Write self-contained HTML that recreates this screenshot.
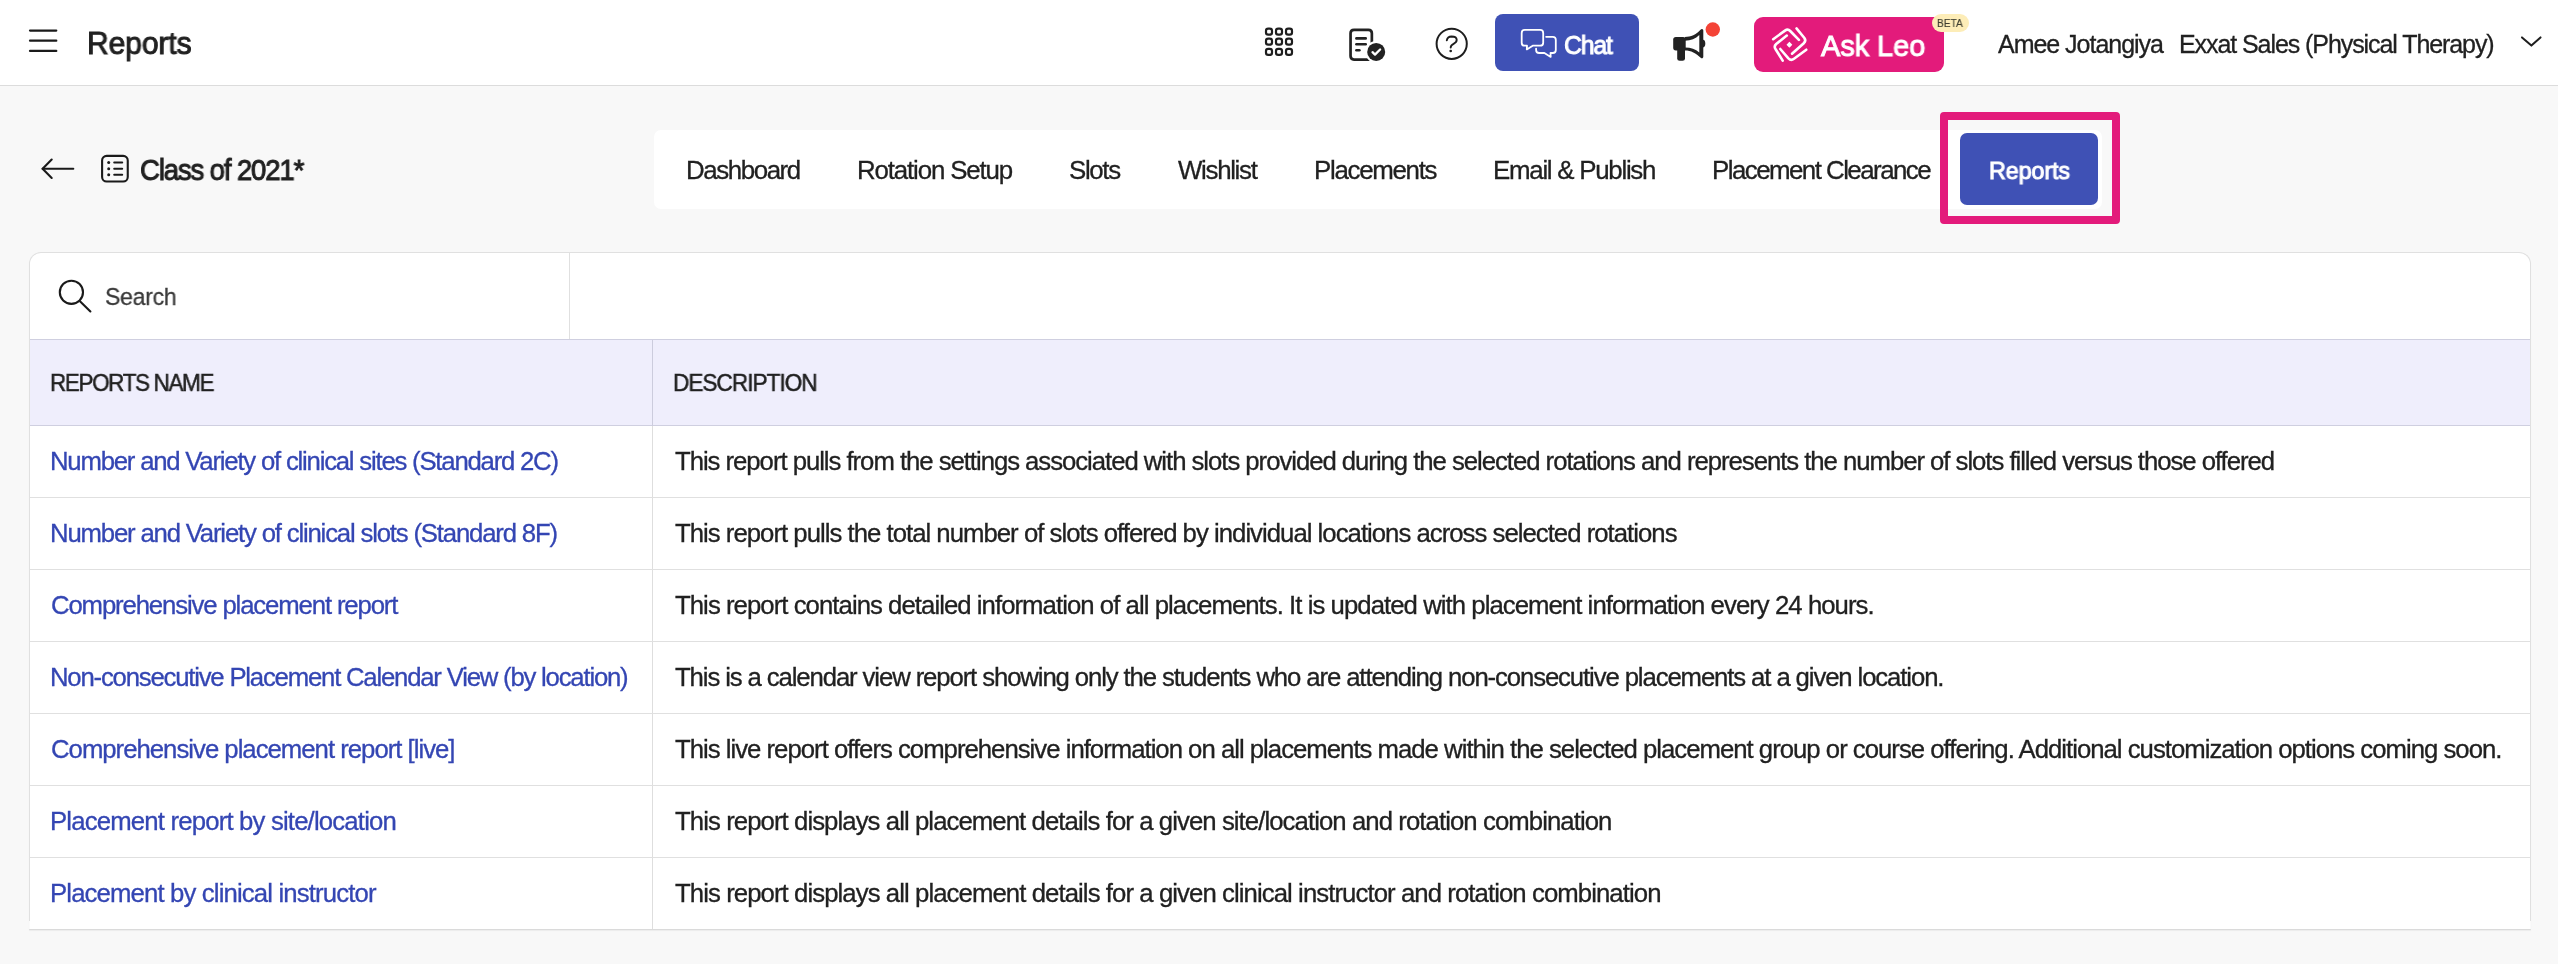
<!DOCTYPE html>
<html><head><meta charset="utf-8"><style>
html,body{margin:0;padding:0;width:2558px;height:964px;overflow:hidden;background:#f8f8f8;position:relative;font-family:"Liberation Sans",sans-serif}
.t{position:absolute;white-space:nowrap;line-height:1;font-family:"Liberation Sans",sans-serif;will-change:transform}
.a{position:absolute;box-sizing:border-box}
svg{position:absolute;overflow:visible}
</style></head><body>
<!-- header -->
<div class="a" style="left:0;top:0;width:2558px;height:85px;background:#fff"></div>
<div class="a" style="left:0;top:85px;width:2558px;height:1px;background:#dcdcdc"></div>
<!-- hamburger -->
<svg style="left:0;top:0" width="80" height="80" viewBox="0 0 80 80">
  <g stroke="#1a1a1a" stroke-width="2.2" stroke-linecap="round">
    <line x1="30" y1="30.6" x2="56.3" y2="30.6"/>
    <line x1="30" y1="40.7" x2="56.3" y2="40.7"/>
    <line x1="30" y1="50.9" x2="56.3" y2="50.9"/>
  </g>
</svg>
<!-- grid icon -->
<svg style="left:1250px;top:15px" width="60" height="60" viewBox="0 0 60 60">
  <g fill="none" stroke="#1e1e1e" stroke-width="2.2">
    <rect x="16.0" y="13.7" width="6.0" height="6.0" rx="2.2"/>
    <rect x="26.0" y="13.7" width="6.0" height="6.0" rx="2.2"/>
    <rect x="36.0" y="13.7" width="6.0" height="6.0" rx="2.2"/>
    <rect x="16.0" y="23.7" width="6.0" height="6.0" rx="2.2"/>
    <rect x="26.0" y="23.7" width="6.0" height="6.0" rx="2.2"/>
    <rect x="36.0" y="23.7" width="6.0" height="6.0" rx="2.2"/>
    <rect x="16.0" y="33.9" width="6.0" height="6.0" rx="2.2"/>
    <rect x="26.0" y="33.9" width="6.0" height="6.0" rx="2.2"/>
    <rect x="36.0" y="33.9" width="6.0" height="6.0" rx="2.2"/>
  </g>
</svg>
<!-- doc check icon -->
<svg style="left:1340px;top:20px" width="50" height="50" viewBox="0 0 50 50">
  <path d="M31.85 23 L31.85 13.3 Q31.85 9.85 28.4 9.85 L14 9.85 Q10.55 9.85 10.55 13.3 L10.55 36.1 Q10.55 39.55 14 39.55 L30 39.55" fill="none" stroke="#222" stroke-width="2.7"/>
  <g stroke="#222" stroke-width="2.6" stroke-linecap="round">
    <line x1="16.4" y1="18.4" x2="25.7" y2="18.4"/>
    <line x1="16.4" y1="24.2" x2="25.7" y2="24.2"/>
    <line x1="16.4" y1="30.3" x2="19.4" y2="30.3"/>
  </g>
  <circle cx="36.2" cy="31.9" r="11" fill="#fff"/>
  <circle cx="36.2" cy="31.9" r="9" fill="#222"/>
  <path d="M32.5 32.2 L35 34.6 L40.1 29.5" fill="none" stroke="#fff" stroke-width="2.3" stroke-linecap="round" stroke-linejoin="round"/>
</svg>
<!-- help icon -->
<svg style="left:1420px;top:12px" width="64" height="64" viewBox="0 0 64 64">
  <circle cx="31.7" cy="31.8" r="15.1" fill="none" stroke="#1e1e1e" stroke-width="2"/>
  <path d="M26.8 28.4 Q27.4 24.6 31.6 24.5 Q36.6 24.5 36.7 27.8 Q36.8 30.2 33.6 31.8 Q30.7 33.2 30.7 35.6" fill="none" stroke="#1e1e1e" stroke-width="1.9" stroke-linecap="round"/>
  <circle cx="30.7" cy="39" r="1.35" fill="#1e1e1e"/>
</svg>
<!-- chat button -->
<div class="a" style="left:1495px;top:14px;width:144px;height:57px;background:#3f51b5;border-radius:8px"></div>
<svg style="left:1515px;top:24px" width="48" height="38" viewBox="0 0 48 38">
  <g fill="none" stroke="#fff" stroke-width="1.8" stroke-linejoin="round" stroke-linecap="round">
    <path d="M12 21.7 L9.5 21.7 Q6.7 21.7 6.7 18.7 L6.7 8.9 Q6.7 5.9 9.7 5.9 L25.2 5.9 Q28.2 5.9 28.2 8.9 L28.2 18.7 Q28.2 21.7 25.2 21.7 L17.7 21.7 L11.8 25.4 Z"/>
    <path d="M31.1 12.8 L37.8 12.8 Q40.8 12.8 40.8 15.8 L40.8 26 Q40.8 29 37.8 29 L35.5 29 L35.7 32.9 L29.4 29 L24.1 29 Q21.1 29 21.1 26 L21.1 24.6"/>
  </g>
</svg>
<!-- megaphone -->
<svg style="left:1665px;top:18px" width="60" height="48" viewBox="0 0 60 48">
  <g fill="#222">
    <rect x="8.2" y="18.9" width="12.5" height="13.5" rx="2.6"/>
    <rect x="12.2" y="28" width="7.8" height="14.8" rx="2.4"/>
    <path fill-rule="evenodd" d="M19.9 18.9 C26 18.9 31 17 35.5 11.8 Q36.6 10.6 37.6 11.2 Q38.3 11.6 38.3 12.6 L38.3 38.8 Q38.3 39.8 37.5 40.2 Q36.6 40.6 35.7 39.8 C31 35 26 32.4 19.9 32.4 Z M19.9 22.7 C26 22.5 30.5 20.6 34.3 16.9 L34.3 34.4 C30.5 31 26 29.4 19.9 29.4 Z"/>
    <ellipse cx="38" cy="25.6" rx="2.3" ry="3.8"/>
  </g>
  <circle cx="47.8" cy="11.5" r="7.2" fill="#f44336"/>
</svg>
<!-- ask leo -->
<div class="a" style="left:1754px;top:17px;width:190px;height:55px;background:#e31b7b;border-radius:9px"></div>
<svg style="left:1766px;top:22px" width="48" height="46" viewBox="0 0 48 46">
  <g fill="none" stroke="#fff" stroke-width="2.6" stroke-linecap="round" stroke-linejoin="round">
    <path d="M7.2 17.2 L19 8.6 Q21.9 6.6 24.2 9 L32.9 17.9"/>
    <path d="M30.5 6.4 L38.4 16 Q40.4 18.8 37.8 21.2 L26 31.7"/>
    <path d="M20.8 13.6 L10.2 22 Q7.6 24.4 9.6 27.2 L16.7 38.6"/>
    <path d="M14.3 27 L22.4 36.4 Q25 39 28 36.8 L40.3 27.7"/>
  </g>
  <rect x="21.3" y="20.6" width="4.2" height="4.2" rx="0.4" fill="#fff" transform="rotate(45 23.4 22.7)"/>
</svg>
<div class="a" style="left:1932px;top:14px;width:36.5px;height:17.5px;background:#fdedb8;border-radius:9px"></div>
<!-- chevron -->
<svg style="left:2500px;top:20px" width="58" height="50" viewBox="0 0 58 50">
  <path d="M22 17.4 L31.4 25.6 L40.5 17.4" fill="none" stroke="#1e1e1e" stroke-width="2" stroke-linecap="round" stroke-linejoin="round"/>
</svg>
<!-- back arrow -->
<svg style="left:30px;top:145px" width="110" height="50" viewBox="0 0 110 50">
  <g fill="none" stroke="#1a1a1a" stroke-width="2.1" stroke-linecap="round" stroke-linejoin="round">
    <path d="M21.7 14.6 L12.6 23.8 L21.7 33"/>
    <line x1="12.6" y1="23.8" x2="43.3" y2="23.8"/>
  </g>
  <rect x="72.1" y="10.9" width="25.65" height="25.65" rx="4.6" fill="none" stroke="#1a1a1a" stroke-width="2.1"/>
  <g fill="#1a1a1a">
    <circle cx="78.7" cy="17.6" r="1.5"/>
    <circle cx="78.7" cy="23.8" r="1.5"/>
    <circle cx="78.7" cy="29.8" r="1.5"/>
  </g>
  <g stroke="#1a1a1a" stroke-width="2" stroke-linecap="round">
    <line x1="84.2" y1="17.6" x2="92.2" y2="17.6"/>
    <line x1="84.2" y1="23.8" x2="92.2" y2="23.8"/>
    <line x1="84.2" y1="29.8" x2="92.2" y2="29.8"/>
  </g>
</svg>
<!-- tab bar -->
<div class="a" style="left:654px;top:130px;width:1448px;height:78.5px;background:#fff;border-radius:7px"></div>
<div class="a" style="left:1960px;top:133px;width:138px;height:72px;background:#3f51b5;border-radius:7px"></div>
<div class="a" style="left:1940px;top:112px;width:180px;height:112px;border:8px solid #e31b7b;border-radius:4px"></div>
<!-- card -->
<div class="a" style="left:29px;top:252px;width:2502px;height:678px;background:#fff;border:1px solid #e0e0e0;border-bottom:1px solid #dadada;border-radius:12px 12px 0 0;box-shadow:0 1px 1px rgba(0,0,0,0.05)"></div>
<div class="a" style="left:569px;top:253px;width:1px;height:86px;background:#e0e0e0"></div>
<div class="a" style="left:29px;top:921px;width:1px;height:8px;background:#fafafa"></div>
<div class="a" style="left:2530px;top:921px;width:1px;height:8px;background:#fafafa"></div>
<div class="a" style="left:30px;top:339px;width:2500px;height:87px;background:#efeefc;border-top:1px solid #cfcfe0;border-bottom:1px solid #cfcfe0"></div>
<div class="a" style="left:652px;top:426px;width:1px;height:503px;background:#dedede"></div>
<div class="a" style="left:652px;top:340px;width:1px;height:86px;background:#ccccdd"></div>
<div class="a" style="left:30px;top:497px;width:2500px;height:1px;background:#e0e0e0"></div>
<div class="a" style="left:30px;top:569px;width:2500px;height:1px;background:#e0e0e0"></div>
<div class="a" style="left:30px;top:641px;width:2500px;height:1px;background:#e0e0e0"></div>
<div class="a" style="left:30px;top:713px;width:2500px;height:1px;background:#e0e0e0"></div>
<div class="a" style="left:30px;top:785px;width:2500px;height:1px;background:#e0e0e0"></div>
<div class="a" style="left:30px;top:857px;width:2500px;height:1px;background:#e0e0e0"></div>
<!-- search icon -->
<svg style="left:40px;top:265px" width="60" height="60" viewBox="0 0 60 60">
  <circle cx="31.4" cy="27.3" r="11.6" fill="none" stroke="#1a1a1a" stroke-width="2.1"/>
  <line x1="40.2" y1="36.4" x2="50.4" y2="46.4" stroke="#1a1a1a" stroke-width="2.1" stroke-linecap="round"/>
</svg>

<div class="t" id="hdr" style="left:86.60px;top:28.70px;font-size:30.95px;letter-spacing:-0.103px;font-weight:400;color:#212121;transform:scaleX(0.9715);transform-origin:0 0;-webkit-text-stroke:0.95px #212121;">Reports</div>
<div class="t" id="cls" style="left:140.30px;top:154.85px;font-size:29.94px;letter-spacing:-1.225px;font-weight:400;color:#212121;transform:scaleX(0.9188);transform-origin:0 0;-webkit-text-stroke:1.0px #212121;">Class of 2021*</div>
<div class="t" id="tab0" style="left:685.50px;top:157.50px;font-size:25.87px;letter-spacing:-1.414px;font-weight:400;color:#212121;-webkit-text-stroke:0.3px #212121;">Dashboard</div>
<div class="t" id="tab1" style="left:856.80px;top:157.50px;font-size:25.87px;letter-spacing:-1.146px;font-weight:400;color:#212121;-webkit-text-stroke:0.3px #212121;">Rotation Setup</div>
<div class="t" id="tab2" style="left:1069.30px;top:157.50px;font-size:25.87px;letter-spacing:-1.350px;font-weight:400;color:#212121;-webkit-text-stroke:0.3px #212121;">Slots</div>
<div class="t" id="tab3" style="left:1178.10px;top:157.50px;font-size:25.87px;letter-spacing:-1.317px;font-weight:400;color:#212121;-webkit-text-stroke:0.3px #212121;">Wishlist</div>
<div class="t" id="tab4" style="left:1314.30px;top:157.50px;font-size:25.87px;letter-spacing:-1.292px;font-weight:400;color:#212121;-webkit-text-stroke:0.3px #212121;">Placements</div>
<div class="t" id="tab5" style="left:1493.00px;top:157.50px;font-size:25.87px;letter-spacing:-1.262px;font-weight:400;color:#212121;-webkit-text-stroke:0.3px #212121;">Email &amp; Publish</div>
<div class="t" id="tab6" style="left:1711.80px;top:157.50px;font-size:25.87px;letter-spacing:-1.534px;font-weight:400;color:#212121;-webkit-text-stroke:0.3px #212121;">Placement Clearance</div>
<div class="t" id="tabR" style="left:1988.50px;top:159.08px;font-size:23.77px;letter-spacing:-0.096px;font-weight:400;color:#ffffff;transform:scaleX(0.9801);transform-origin:0 0;-webkit-text-stroke:1.0px #ffffff;">Reports</div>
<div class="t" id="chat" style="left:1563.60px;top:32.07px;font-size:26.37px;letter-spacing:-1.107px;font-weight:400;color:#ffffff;transform:scaleX(0.9336);transform-origin:0 0;-webkit-text-stroke:1.0px #ffffff;">Chat</div>
<div class="t" id="leo" style="left:1821.40px;top:32.44px;font-size:29.14px;letter-spacing:-0.013px;font-weight:400;color:#ffffff;transform:scaleX(0.9917);transform-origin:0 0;-webkit-text-stroke:1.0px #ffffff;">Ask Leo</div>
<div class="t" id="beta" style="left:1937.00px;top:16.66px;font-size:11.63px;letter-spacing:0.000px;font-weight:400;color:#3e3e30;transform:scaleX(0.8746);transform-origin:0 0;-webkit-text-stroke:0.15px #3e3e30;">BETA</div>
<div class="t" id="amee" style="left:1998.20px;top:31.74px;font-size:25.00px;letter-spacing:-1.028px;font-weight:400;color:#212121;-webkit-text-stroke:0.3px #212121;">Amee Jotangiya</div>
<div class="t" id="exxat" style="left:2179.20px;top:31.74px;font-size:25.00px;letter-spacing:-1.076px;font-weight:400;color:#212121;-webkit-text-stroke:0.3px #212121;">Exxat Sales (Physical Therapy)</div>
<div class="t" id="search" style="left:105.10px;top:285.13px;font-size:24.30px;letter-spacing:-0.361px;font-weight:400;color:#3a3a3a;transform:scaleX(0.9520);transform-origin:0 0;-webkit-text-stroke:0.3px #3a3a3a;">Search</div>
<div class="t" id="th1" style="left:49.70px;top:371.11px;font-size:24.56px;letter-spacing:-1.427px;font-weight:400;color:#212121;transform:scaleX(0.9121);transform-origin:0 0;-webkit-text-stroke:0.5px #212121;">REPORTS NAME</div>
<div class="t" id="th2" style="left:673.20px;top:371.11px;font-size:24.56px;letter-spacing:-1.056px;font-weight:400;color:#212121;transform:scaleX(0.9193);transform-origin:0 0;-webkit-text-stroke:0.5px #212121;">DESCRIPTION</div>
<div class="t" id="rn0" style="left:49.70px;top:448.92px;font-size:25.73px;letter-spacing:-1.212px;font-weight:400;color:#3446b3;-webkit-text-stroke:0.3px #3446b3;">Number and Variety of clinical sites (Standard 2C)</div>
<div class="t" id="rd0" style="left:675.20px;top:448.92px;font-size:25.73px;letter-spacing:-1.035px;font-weight:400;color:#212121;-webkit-text-stroke:0.3px #212121;">This report pulls from the settings associated with slots provided during the selected rotations and represents the number of slots filled versus those offered</div>
<div class="t" id="rn1" style="left:49.70px;top:520.92px;font-size:25.73px;letter-spacing:-1.174px;font-weight:400;color:#3446b3;-webkit-text-stroke:0.3px #3446b3;">Number and Variety of clinical slots (Standard 8F)</div>
<div class="t" id="rd1" style="left:675.20px;top:520.92px;font-size:25.73px;letter-spacing:-0.978px;font-weight:400;color:#212121;-webkit-text-stroke:0.3px #212121;">This report pulls the total number of slots offered by individual locations across selected rotations</div>
<div class="t" id="rn2" style="left:50.70px;top:592.92px;font-size:25.73px;letter-spacing:-1.132px;font-weight:400;color:#3446b3;-webkit-text-stroke:0.3px #3446b3;">Comprehensive placement report</div>
<div class="t" id="rd2" style="left:675.20px;top:592.92px;font-size:25.73px;letter-spacing:-0.947px;font-weight:400;color:#212121;-webkit-text-stroke:0.3px #212121;">This report contains detailed information of all placements. It is updated with placement information every 24 hours.</div>
<div class="t" id="rn3" style="left:49.70px;top:664.92px;font-size:25.73px;letter-spacing:-1.206px;font-weight:400;color:#3446b3;-webkit-text-stroke:0.3px #3446b3;">Non-consecutive Placement Calendar View (by location)</div>
<div class="t" id="rd3" style="left:675.20px;top:664.92px;font-size:25.73px;letter-spacing:-1.111px;font-weight:400;color:#212121;-webkit-text-stroke:0.3px #212121;">This is a calendar view report showing only the students who are attending non-consecutive placements at a given location.</div>
<div class="t" id="rn4" style="left:50.70px;top:736.92px;font-size:25.73px;letter-spacing:-0.995px;font-weight:400;color:#3446b3;-webkit-text-stroke:0.3px #3446b3;">Comprehensive placement report [live]</div>
<div class="t" id="rd4" style="left:675.20px;top:736.92px;font-size:25.73px;letter-spacing:-0.992px;font-weight:400;color:#212121;-webkit-text-stroke:0.3px #212121;">This live report offers comprehensive information on all placements made within the selected placement group or course offering. Additional customization options coming soon.</div>
<div class="t" id="rn5" style="left:49.70px;top:808.92px;font-size:25.73px;letter-spacing:-0.821px;font-weight:400;color:#3446b3;-webkit-text-stroke:0.3px #3446b3;">Placement report by site/location</div>
<div class="t" id="rd5" style="left:675.20px;top:808.92px;font-size:25.73px;letter-spacing:-0.921px;font-weight:400;color:#212121;-webkit-text-stroke:0.3px #212121;">This report displays all placement details for a given site/location and rotation combination</div>
<div class="t" id="rn6" style="left:49.70px;top:880.92px;font-size:25.73px;letter-spacing:-0.856px;font-weight:400;color:#3446b3;-webkit-text-stroke:0.3px #3446b3;">Placement by clinical instructor</div>
<div class="t" id="rd6" style="left:675.20px;top:880.92px;font-size:25.73px;letter-spacing:-0.918px;font-weight:400;color:#212121;-webkit-text-stroke:0.3px #212121;">This report displays all placement details for a given clinical instructor and rotation combination</div>
</body></html>
